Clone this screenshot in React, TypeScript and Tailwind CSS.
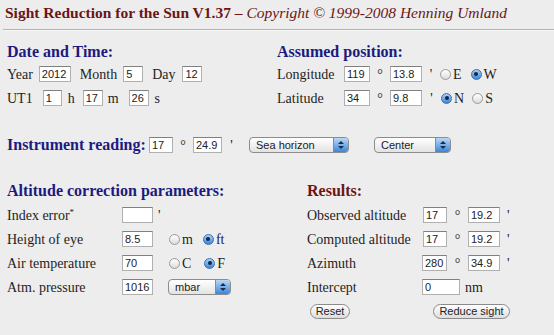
import clsx from 'clsx';

// small aqua-ish controls drawn with plain divs
function Box({ v, w }: { v: string; w: string }) {
  return (
    <input
      readOnly
      value={v}
      className={clsx(
        "block h-[16px] shrink-0 border border-[#b0b0b0] border-t-[#808080] bg-white px-[2px] font-['Liberation_Sans',Arial,sans-serif] text-[11px] text-[#222] outline-none",
        w,
      )}
    />
  );
}

function Radio({ on }: { on?: boolean }) {
  if (on)
    return (
      <span className="flex h-[11px] w-[11px] shrink-0 items-center justify-center rounded-full border border-[#3d6fae] bg-[linear-gradient(#a9cff5,#3b86e0)]">
        <span className="block h-[4px] w-[4px] rounded-full bg-[#13253f]" />
      </span>
    );
  return <span className="block h-[11px] w-[11px] shrink-0 rounded-full border border-[#9a9a9a] bg-[linear-gradient(#ffffff,#dcdcdc)]" />;
}

function Select({ label, w }: { label: string; w: string }) {
  return (
    <div
      className={clsx(
        "flex h-[16px] shrink-0 items-center overflow-hidden rounded-[4px] border border-[#8c8c8c] bg-[linear-gradient(#ffffff,#e3e3e3)] font-['Liberation_Sans',Arial,sans-serif] text-[11px] text-[#222]",
        w,
      )}
    >
      <span className="flex-1 pl-[6px]">{label}</span>
      <span className="flex h-full w-[15px] flex-col items-center justify-center gap-[2px] border-l border-[#6a8fc0] bg-[linear-gradient(#b8d8f8,#3a86dc)]">
        <svg width="6" height="3" viewBox="0 0 6 3">
          <path d="M0 3L3 0L6 3Z" fill="#1b2b44" />
        </svg>
        <svg width="6" height="3" viewBox="0 0 6 3">
          <path d="M0 0L3 3L6 0Z" fill="#1b2b44" />
        </svg>
      </span>
    </div>
  );
}

function Btn({ label, w }: { label: string; w: string }) {
  return (
    <button
      className={clsx(
        "flex h-[15px] items-center justify-center rounded-full border border-[#8a8a8a] bg-[linear-gradient(#ffffff,#dedede)] font-['Liberation_Sans',Arial,sans-serif] text-[11px] text-[#222]",
        w,
      )}
    >
      {label}
    </button>
  );
}

const Deg = () => <span className="w-[20px] text-center">°</span>;

export default function App() {
  return (
    <div className="h-[335px] w-[554px] overflow-hidden bg-[#ededed] font-['Liberation_Serif','Times_New_Roman',serif] text-[14px] text-[#1e1e1e]">
      <div className="pl-[5px] pt-[3px] text-[15.5px] leading-[20px] text-[#6b1518]">
        <span className="font-bold">Sight Reduction for the Sun V1.37</span>
        <span className="font-bold"> – </span>
        <span className="italic">Copyright © 1999-2008 Henning Umland</span>
      </div>
      <div className="ml-[3px] mt-[6px] border-t border-b border-t-[#b4b4b4] border-b-[#f7f7f7]" />

      <div className="mt-[11px] flex px-[7px]">
        <div className="w-[270px]">
          <div className="text-[16px] font-bold leading-[20px] text-[#1c1a80]">Date and Time:</div>
          <div className="flex h-[24px] items-center">
            <span>Year</span>
            <span className="ml-[6px]"><Box v="2012" w="w-[32px]" /></span>
            <span className="ml-[9px]">Month</span>
            <span className="ml-[6px]"><Box v="5" w="w-[20px]" /></span>
            <span className="ml-[9px]">Day</span>
            <span className="ml-[7px]"><Box v="12" w="w-[20px]" /></span>
          </div>
          <div className="flex h-[24px] items-center">
            <span>UT1</span>
            <span className="ml-[10px]"><Box v="1" w="w-[19px]" /></span>
            <span className="ml-[6px]">h</span>
            <span className="ml-[8px]"><Box v="17" w="w-[20px]" /></span>
            <span className="ml-[5px]">m</span>
            <span className="ml-[10px]"><Box v="26" w="w-[20px]" /></span>
            <span className="ml-[6px]">s</span>
          </div>
        </div>
        <div>
          <div className="text-[16px] font-bold leading-[20px] text-[#1c1a80]">Assumed position:</div>
          <div className="flex h-[24px] items-center">
            <span className="w-[67px]">Longitude</span>
            <Box v="119" w="w-[26px]" />
            <Deg />
            <Box v="13.8" w="w-[32px]" />
            <span className="w-[18px] text-center">'</span>
            <Radio />
            <span className="ml-[2px]">E</span>
            <span className="ml-[9px]"><Radio on /></span>
            <span className="ml-[2px]">W</span>
          </div>
          <div className="flex h-[24px] items-center">
            <span className="w-[67px]">Latitude</span>
            <Box v="34" w="w-[26px]" />
            <Deg />
            <Box v="9.8" w="w-[32px]" />
            <span className="w-[19px] text-center">'</span>
            <Radio on />
            <span className="ml-[2px]">N</span>
            <span className="ml-[8px]"><Radio /></span>
            <span className="ml-[2px]">S</span>
          </div>
        </div>
      </div>

      <div className="mt-[23px] flex h-[24px] items-center px-[7px]">
        <span className="w-[142px] whitespace-nowrap text-[16px] font-bold text-[#1c1a80]">Instrument reading:</span>
        <Box v="17" w="w-[24px]" />
        <Deg />
        <Box v="24.9" w="w-[29px]" />
        <span className="w-[27px] pr-[8px] text-center">'</span>
        <Select label="Sea horizon" w="w-[100px]" />
        <span className="ml-[25px]"><Select label="Center" w="w-[77px]" /></span>
      </div>

      <div className="mt-[24px] flex px-[7px]">
        <div className="w-[293px]">
          <div className="text-[16px] font-bold leading-[20px] text-[#1c1a80]">Altitude correction parameters:</div>
          <div className="mt-[2px] flex h-[24px] items-center">
            <span className="w-[115px]">
              Index error<sup className="text-[9px]">*</sup>
            </span>
            <Box v="" w="w-[31px]" />
            <span className="ml-[5px]">'</span>
          </div>
          <div className="flex h-[24px] items-center">
            <span className="w-[115px]">Height of eye</span>
            <Box v="8.5" w="w-[31px]" />
            <span className="ml-[16px]"><Radio /></span>
            <span className="ml-[2px]">m</span>
            <span className="ml-[10px]"><Radio on /></span>
            <span className="ml-[2px]">ft</span>
          </div>
          <div className="flex h-[24px] items-center">
            <span className="w-[115px]">Air temperature</span>
            <Box v="70" w="w-[31px]" />
            <span className="ml-[16px]"><Radio /></span>
            <span className="ml-[2px]">C</span>
            <span className="ml-[13px]"><Radio on /></span>
            <span className="ml-[2px]">F</span>
          </div>
          <div className="flex h-[24px] items-center">
            <span className="w-[115px]">Atm. pressure</span>
            <Box v="1016" w="w-[31px]" />
            <span className="ml-[15px]"><Select label="mbar" w="w-[63px]" /></span>
          </div>
        </div>
        <div className="pl-[7px]">
          <div className="text-[16px] font-bold leading-[20px] text-[#6b1518]">Results:</div>
          <div className="mt-[2px] flex h-[24px] items-center">
            <span className="w-[116px]">Observed altitude</span>
            <Box v="17" w="w-[24px]" />
            <span className="w-[21px] text-center">°</span>
            <Box v="19.2" w="w-[32px]" />
            <span className="ml-[7px]">'</span>
          </div>
          <div className="flex h-[24px] items-center">
            <span className="w-[116px] whitespace-nowrap">Computed altitude</span>
            <Box v="17" w="w-[24px]" />
            <span className="w-[21px] text-center">°</span>
            <Box v="19.2" w="w-[32px]" />
            <span className="ml-[7px]">'</span>
          </div>
          <div className="flex h-[24px] items-center">
            <span className="w-[115px]">Azimuth</span>
            <Box v="280" w="w-[25px]" />
            <span className="w-[21px] text-center">°</span>
            <Box v="34.9" w="w-[32px]" />
            <span className="ml-[7px]">'</span>
          </div>
          <div className="flex h-[24px] items-center">
            <span className="w-[115px]">Intercept</span>
            <Box v="0" w="w-[38px]" />
            <span className="ml-[5px]">nm</span>
          </div>
          <div className="flex h-[24px] items-center">
            <span className="ml-[3px]"><Btn label="Reset" w="w-[40px]" /></span>
            <span className="ml-[83px]"><Btn label="Reduce sight" w="w-[77px]" /></span>
          </div>
        </div>
      </div>
    </div>
  );
}
